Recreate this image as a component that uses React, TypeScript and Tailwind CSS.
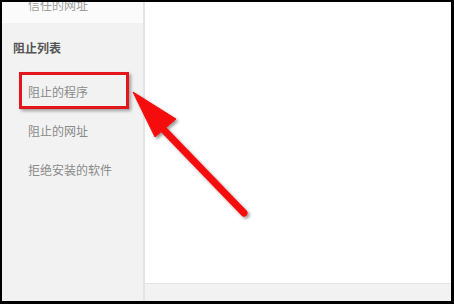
import React from "react";

export default function App() {
  const font = { fontFamily: '"Noto Sans CJK SC", "Noto Sans", sans-serif' };
  return (
    <div className="relative w-[454px] h-[304px] bg-black pt-[2px] pl-[2px] pr-[3px] pb-[3px]" style={font}>
      <div className="flex w-full h-full overflow-hidden">
        <div className="relative w-[143px] h-full bg-[#f2f2f2] border-r-2 border-[#e4e4e4] flex flex-col">
          <div className="h-[21px] bg-[#fbfbfb] overflow-hidden">
            <div className="pl-[26px] -mt-[3px] text-[12px] leading-[12px] text-[#a0a0a0]">信任的网址</div>
          </div>
          <div className="mt-[18px] h-[14px] pl-[11px] text-[12px] leading-[14px] font-bold text-[#555555]">阻止列表</div>
          <div className="mt-[17px] flex flex-col">
            <div className="relative h-[39px] flex items-center pl-[26px] text-[12px] text-[#8a8a8a]">
              阻止的程序
              <div className="absolute left-[17px] top-0 w-[110px] h-[37px] border-[3px] border-[#e3161c] shadow-[2px_2px_3px_rgba(0,0,0,0.35)]" />
            </div>
            <div className="h-[39px] flex items-center pl-[26px] text-[12px] text-[#8a8a8a]">阻止的网址</div>
            <div className="h-[39px] flex items-center pl-[26px] text-[12px] text-[#8a8a8a]">拒绝安装的软件</div>
          </div>
        </div>
        <div className="flex-1 flex flex-col">
          <div className="flex-1 bg-white" />
          <div className="h-[18px] bg-[#f2f2f2] border-t border-[#e4e4e4]" />
        </div>
      </div>
      <svg className="absolute inset-0 pointer-events-none" width="454" height="304" viewBox="0 0 454 304">
        <defs>
          <filter id="sh" x="-20%" y="-20%" width="140%" height="140%">
            <feDropShadow dx="2" dy="2" stdDeviation="1.5" floodColor="#000" floodOpacity="0.4" />
          </filter>
        </defs>
        <g filter="url(#sh)" fill="#f50a0a" stroke="#f50a0a">
          <line x1="162" y1="128" x2="244" y2="213" strokeWidth="7" strokeLinecap="round" />
          <polygon points="133,92 176,119 155,137" strokeWidth="1" strokeLinejoin="round" />
        </g>
      </svg>
    </div>
  );
}
